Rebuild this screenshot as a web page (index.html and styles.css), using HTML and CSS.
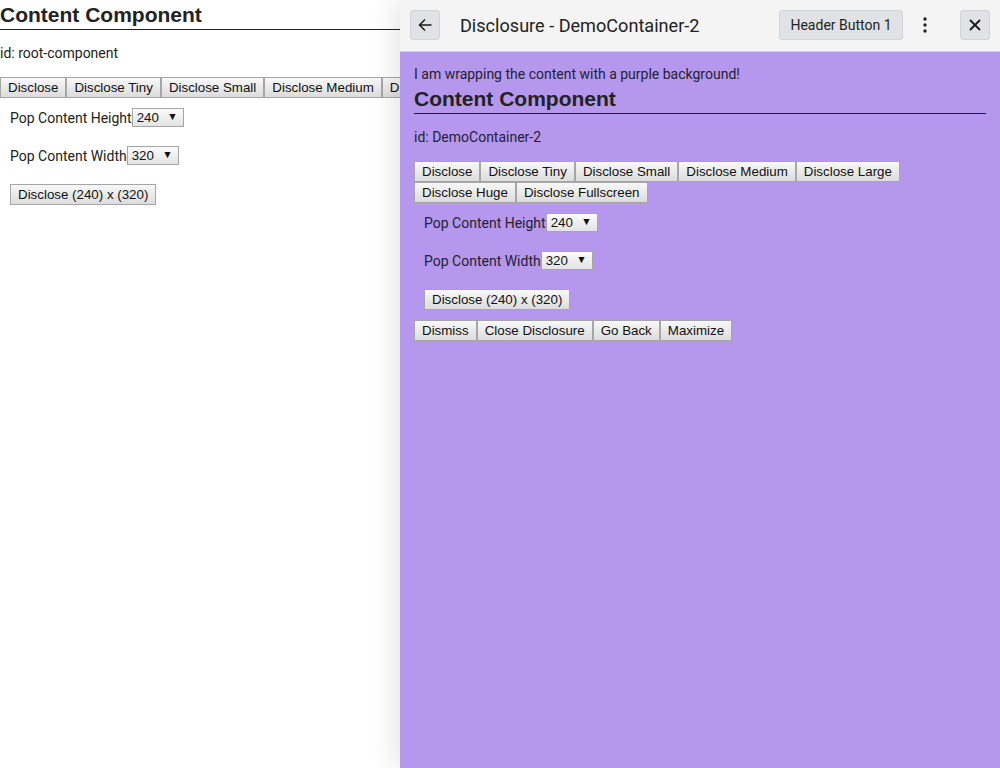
FILE: index.html
```html
<!DOCTYPE html>
<html>
<head>
<meta charset="utf-8">
<link rel="stylesheet" href="styles.css">
</head>
<body>
<div class="root">
  <h2 class="cc-title">Content Component</h2>
  <p class="cc-id">id: root-component</p>
  <div class="btn-row nowrap">
    <button class="btn">Disclose</button><button class="btn">Disclose Tiny</button><button class="btn">Disclose Small</button><button class="btn">Disclose Medium</button><button class="btn">Disclose Large</button><button class="btn">Disclose Huge</button><button class="btn">Disclose Fullscreen</button>
  </div>
  <div class="pop">
    <div class="pop-row"><span class="lbl">Pop Content Height</span><span class="sel">240<span class="arrow">▼</span></span></div>
    <div class="pop-row"><span class="lbl">Pop Content Width</span><span class="sel">320<span class="arrow">▼</span></span></div>
    <div class="pop-row last"><button class="btn">Disclose (240) x (320)</button></div>
  </div>
</div>

<div class="panel">
  <div class="panel-header">
    <button class="hbtn icon-btn" aria-label="Back">
      <svg width="16" height="16" viewBox="0 0 16 16"><path d="M14.5 8H2.5M8 2.5L2.5 8L8 13.5" fill="none" stroke="#1a1a1a" stroke-width="1.5"/></svg>
    </button>
    <span class="panel-title">Disclosure - DemoContainer-2</span>
    <button class="hbtn text-btn">Header Button 1</button>
    <span class="kebab">
      <svg width="6" height="18" viewBox="0 0 6 18"><circle cx="3" cy="3" r="1.7" fill="#222"/><circle cx="3" cy="9" r="1.7" fill="#222"/><circle cx="3" cy="15" r="1.7" fill="#222"/></svg>
    </span>
    <button class="hbtn icon-btn close" aria-label="Close">
      <svg width="14" height="14" viewBox="0 0 14 14"><path d="M2 2l10 10M12 2L2 12" fill="none" stroke="#1a1a1a" stroke-width="1.8"/></svg>
    </button>
  </div>
  <div class="panel-body">
    <p class="wrap-note">I am wrapping the content with a purple background!</p>
    <h2 class="cc-title">Content Component</h2>
    <p class="cc-id">id: DemoContainer-2</p>
    <div class="btn-row">
      <button class="btn">Disclose</button><button class="btn">Disclose Tiny</button><button class="btn">Disclose Small</button><button class="btn">Disclose Medium</button><button class="btn">Disclose Large</button><button class="btn">Disclose Huge</button><button class="btn">Disclose Fullscreen</button>
    </div>
    <div class="pop">
      <div class="pop-row"><span class="lbl">Pop Content Height</span><span class="sel">240<span class="arrow">▼</span></span></div>
      <div class="pop-row"><span class="lbl">Pop Content Width</span><span class="sel">320<span class="arrow">▼</span></span></div>
      <div class="pop-row last"><button class="btn">Disclose (240) x (320)</button></div>
    </div>
    <div class="btn-row">
      <button class="btn">Dismiss</button><button class="btn">Close Disclosure</button><button class="btn">Go Back</button><button class="btn">Maximize</button>
    </div>
  </div>
</div>
</body>
</html>
```

FILE: styles.css
```css
html, body {
  margin: 0;
  padding: 0;
  background: #ffffff;
}
body {
  font-family: Roboto, "Liberation Sans", Arial, sans-serif;
  font-size: 14px;
  color: #222222;
  width: 1000px;
  height: 768px;
  overflow: hidden;
  position: relative;
}
.root {
  width: 1000px;
}
.cc-title {
  margin: 0;
  font-family: "Liberation Sans", Arial, sans-serif;
  font-weight: bold;
  font-size: 21px;
  line-height: 29px;
  height: 29px;
  border-bottom: 1px solid #222;
  color: #222;
}
.cc-id {
  margin: 15px 0 16px;
  line-height: 16px;
}
.btn-row {
  display: flex;
  flex-wrap: wrap;
}
.btn-row.nowrap {
  flex-wrap: nowrap;
}
.btn {
  font-family: "Liberation Sans", Arial, sans-serif;
  font-size: 13.33px;
  line-height: 15px;
  height: 21px;
  padding: 2px 7px;
  margin: 0;
  border: 1px solid #a6a6a6;
  border-radius: 0;
  background: linear-gradient(#f8f8f8, #dcdcdc);
  color: #111;
  white-space: nowrap;
  flex: none;
}
.pop {
  padding: 10px;
  display: flex;
  flex-direction: column;
  align-items: flex-start;
  gap: 19px;
}
.pop-row {
  display: flex;
  align-items: center;
  height: 19px;
}
.pop-row.last {
  height: 21px;
}
.lbl {
  line-height: 16px;
}
.sel {
  position: relative;
  display: inline-block;
  box-sizing: border-box;
  width: 52px;
  height: 19px;
  padding: 0 0 0 4px;
  border: 1px solid #a6a6a6;
  background: linear-gradient(#fbfbfb, #e3e3e3);
  font-family: "Liberation Sans", Arial, sans-serif;
  font-size: 13.33px;
  line-height: 17px;
  color: #111;
}
.arrow {
  position: absolute;
  right: 5px;
  top: 0;
  font-size: 10.5px;
  line-height: 15px;
}
.panel {
  position: absolute;
  top: 0;
  left: 400px;
  width: 600px;
  height: 768px;
  background: #b597ee;
  box-shadow: -6px 0 24px rgba(0,0,0,0.10);
  display: flex;
  flex-direction: column;
}
.panel-header {
  height: 52px;
  box-sizing: border-box;
  padding: 10px 10px 11px;
  background: #f4f4f5;
  border-bottom: 1px solid #d5d5d8;
  display: flex;
  align-items: center;
  flex: none;
}
.hbtn {
  box-sizing: border-box;
  height: 30px;
  margin: 0;
  border: 1px solid #d2d3d6;
  border-radius: 3px;
  background: #e1e2e5;
  font-family: Roboto, "Liberation Sans", sans-serif;
  color: #222;
  display: flex;
  align-items: center;
  justify-content: center;
}
.icon-btn {
  width: 30px;
  padding: 0;
}
.text-btn {
  width: 124px;
  font-size: 14px;
  padding: 0 10px;
  white-space: nowrap;
}
.panel-title {
  margin-left: 20px;
  font-size: 18.1px;
  color: #222;
  flex: 1;
  white-space: nowrap;
}
.kebab {
  width: 30px;
  height: 30px;
  margin-left: 7px;
  display: flex;
  align-items: center;
  justify-content: center;
}
.close {
  margin-left: 20px;
}
.panel-body {
  padding: 14px;
  flex: 1;
  color: #222233;
}
.wrap-note {
  margin: 0;
  line-height: 16px;
}
.panel-body .cc-title {
  height: 29px;
  padding-top: 2px;
  line-height: 29px;
}
```
